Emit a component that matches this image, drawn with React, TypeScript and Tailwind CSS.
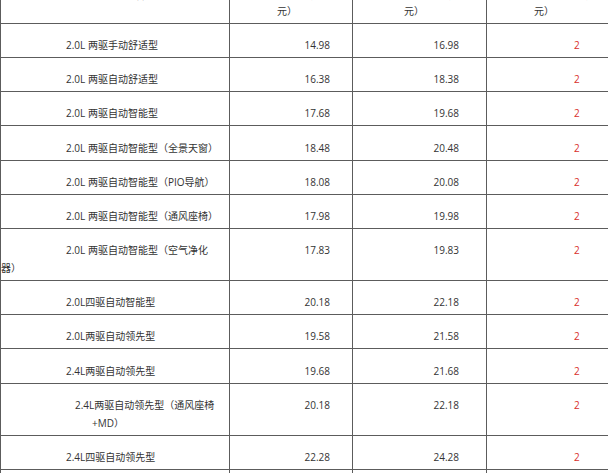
const rows: { name: [string, number][]; guide: string; dealer: string; tall?: boolean }[] = [
  { name: [['2.0L 两驱手动舒适型', 65]], guide: '14.98', dealer: '16.98' },
  { name: [['2.0L 两驱自动舒适型', 65]], guide: '16.38', dealer: '18.38' },
  { name: [['2.0L 两驱自动智能型', 65]], guide: '17.68', dealer: '19.68' },
  { name: [['2.0L 两驱自动智能型（全景天窗）', 65]], guide: '18.48', dealer: '20.48', tall: true },
  { name: [['2.0L 两驱自动智能型（PIO导航）', 65]], guide: '18.08', dealer: '20.08' },
  { name: [['2.0L 两驱自动智能型（通风座椅）', 65]], guide: '17.98', dealer: '19.98' },
  {
    name: [
      ['2.0L 两驱自动智能型（空气净化', 65],
      ['器）', 0],
    ],
    guide: '17.83',
    dealer: '19.83',
  },
  { name: [['2.0L四驱自动智能型', 65]], guide: '20.18', dealer: '22.18' },
  { name: [['2.0L两驱自动领先型', 65]], guide: '19.58', dealer: '21.58' },
  { name: [['2.4L两驱自动领先型', 65]], guide: '19.68', dealer: '21.68', tall: true },
  {
    name: [
      ['2.4L两驱自动领先型（通风座椅', 74],
      ['+MD）', 91],
    ],
    guide: '20.18',
    dealer: '22.18',
  },
  { name: [['2.4L四驱自动领先型', 65]], guide: '22.28', dealer: '24.28' },
];

const cell = 'border border-[#5c5c5c] p-0 align-top';
const head = 'leading-[16px] pb-[4px] whitespace-nowrap';

function Inner({ tall, className = '', children }: { tall?: boolean; className?: string; children: React.ReactNode }) {
  return (
    <div className={`${tall ? 'pt-[13px]' : 'pt-[12px]'} pb-[3px] leading-[18px] whitespace-nowrap ${className}`}>
      {children}
    </div>
  );
}

export default function App() {
  return (
    <div className="w-[608px] h-[473px] overflow-hidden bg-white text-[10px] text-[#333] font-['Open_Sans','Noto_Sans_CJK_SC',sans-serif]">
      <table className="-mt-[14px] border-collapse table-fixed w-[622px]">
        <colgroup>
          <col className="w-[229px]" />
          <col className="w-[123px]" />
          <col className="w-[134px]" />
          <col className="w-[136px]" />
        </colgroup>
        <thead>
          <tr>
            <th className={`${cell} font-normal text-left`}>
              <div className={head}>
                <div className="pl-[114px]">车型名称</div>
                <div>&nbsp;</div>
              </div>
            </th>
            <th className={`${cell} font-normal text-left`}>
              <div className={head}>
                <div className="pl-[11px]">厂商指导价格（万</div>
                <div className="pl-[47px]">元）</div>
              </div>
            </th>
            <th className={`${cell} font-normal text-left`}>
              <div className={head}>
                <div className="pl-[36px]">经销商报价（万</div>
                <div className="pl-[51px]">元）</div>
              </div>
            </th>
            <th className={`${cell} font-normal text-left`}>
              <div className={head}>
                <div className="pl-[29px]">最高优惠幅度（万</div>
                <div className="pl-[47px]">元）</div>
              </div>
            </th>
          </tr>
        </thead>
        <tbody>
          {rows.map((r, i) => (
            <tr key={i}>
              <td className={cell}>
                <Inner tall={r.tall}>
                  {r.name.map(([t, ind], j) => (
                    <div key={j} style={{ paddingLeft: ind }}>
                      {t}
                    </div>
                  ))}
                </Inner>
              </td>
              <td className={`${cell} text-right`}>
                <Inner tall={r.tall} className="pr-[22px]">{r.guide}</Inner>
              </td>
              <td className={`${cell} text-right`}>
                <Inner tall={r.tall} className="pr-[27px]">{r.dealer}</Inner>
              </td>
              <td className={cell}>
                <Inner tall={r.tall} className="pl-[87px] text-[#d9302c]">2</Inner>
              </td>
            </tr>
          ))}
          <tr>
            <td className={cell}>
              <Inner>&nbsp;</Inner>
            </td>
            <td className={cell}>
              <Inner>&nbsp;</Inner>
            </td>
            <td className={cell}>
              <Inner>&nbsp;</Inner>
            </td>
            <td className={cell}>
              <Inner>&nbsp;</Inner>
            </td>
          </tr>
        </tbody>
      </table>
    </div>
  );
}
